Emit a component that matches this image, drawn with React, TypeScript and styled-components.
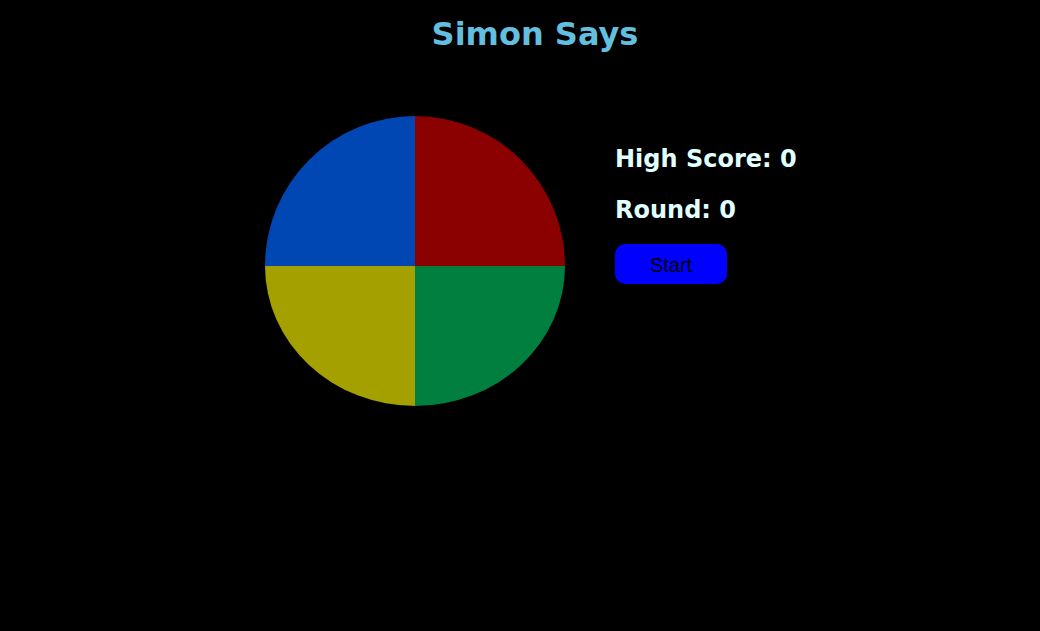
import React from 'react';
import styled, { createGlobalStyle } from 'styled-components';

const GlobalStyle = createGlobalStyle`
  html, body {
    margin: 0;
    padding: 0;
    background: #000;
  }
  body {
    font-family: "DejaVu Sans", Verdana, sans-serif;
  }
`;

const Page = styled.div`
  min-height: 100vh;
  background: #000;
  padding-left: 30px;
  box-sizing: border-box;
`;

const Title = styled.h1`
  margin: 0;
  padding-top: 15px;
  text-align: center;
  font-size: 32px;
  font-weight: bold;
  line-height: 38px;
  color: #62bfdf;
`;

const Board = styled.div`
  display: flex;
  justify-content: center;
  align-items: flex-start;
  gap: 50px;
  margin-top: 63px;
`;

const Wheel = styled.div`
  display: grid;
  grid-template-columns: 150px 150px;
  grid-template-rows: 150px 140px;
`;

type Corner = 'tl' | 'tr' | 'bl' | 'br';

const radii: Record<Corner, string> = {
  tl: '150px 0 0 0',
  tr: '0 150px 0 0',
  bl: '0 0 0 150px / 0 0 0 140px',
  br: '0 0 150px 0 / 0 0 140px 0',
};

const Pad = styled.button<{ $color: string; $corner: Corner }>`
  border: none;
  padding: 0;
  margin: 0;
  cursor: pointer;
  background: ${p => p.$color};
  border-radius: ${p => radii[p.$corner]};
`;

const Panel = styled.div`
  width: 190px;
  display: flex;
  flex-direction: column;
  padding-top: 29px;
`;

const Stat = styled.p`
  margin: 0 0 22px;
  font-size: 24px;
  font-weight: bold;
  line-height: 29px;
  color: #e0ffff;
  white-space: nowrap;
`;

const StartButton = styled.button`
  width: 112px;
  height: 40px;
  margin-top: -3px;
  padding: 2px 0 0;
  border: none;
  border-radius: 10px;
  background: #0000ff;
  color: #000;
  font-family: "Liberation Sans", Arial, sans-serif;
  font-size: 20px;
  cursor: pointer;
`;

export default function App() {
  return (
    <Page>
      <GlobalStyle />
      <Title>Simon Says</Title>
      <Board>
        <Wheel>
          <Pad $color="#0047b3" $corner="tl" aria-label="blue" />
          <Pad $color="#8b0000" $corner="tr" aria-label="red" />
          <Pad $color="#a3a000" $corner="bl" aria-label="yellow" />
          <Pad $color="#007f3f" $corner="br" aria-label="green" />
        </Wheel>
        <Panel>
          <Stat>High Score: 0</Stat>
          <Stat>Round: 0</Stat>
          <StartButton>Start</StartButton>
        </Panel>
      </Board>
    </Page>
  );
}
